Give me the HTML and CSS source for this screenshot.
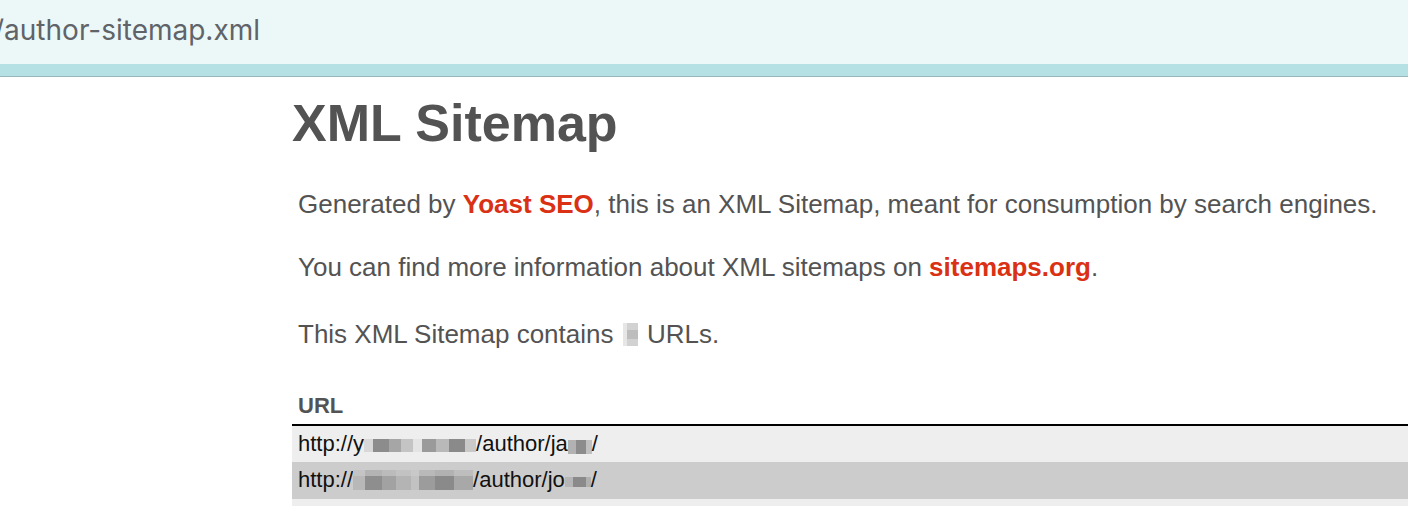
FILE: index.html
```html
<!DOCTYPE html>
<html lang="en">
<head>
<meta charset="utf-8">
<title>XML Sitemap</title>
<link rel="stylesheet" href="styles.css">
</head>
<body>
<header class="addr">
  <span class="addr-text">/author-sitemap.xml</span>
</header>
<div class="band"></div>
<main class="content">
  <h1>XML Sitemap</h1>
  <p class="expl expl-first">Generated by <a href="#">Yoast SEO</a>, this is an XML Sitemap, meant for consumption by search engines.</p>
  <p class="expl expl-second">You can find more information about XML sitemaps on <a href="#">sitemaps.org</a>.</p>
  <p class="expl">This XML Sitemap contains <span class="blur blur-count"></span> URLs.</p>
  <table class="sitemap">
    <thead>
      <tr>
        <th class="col-url">URL</th>
        <th>Images</th>
        <th>Last Mod.</th>
      </tr>
    </thead>
    <tbody>
      <tr class="odd">
        <td><a href="#">http://y<span class="blur blur-host1"></span>/author/ja<span class="blur blur-name"></span>/</a></td>
        <td>0</td>
        <td>2020-01-01</td>
      </tr>
      <tr class="hover">
        <td><a href="#">http://<span class="blur blur-host2"></span>/author/jo<span class="blur blur-name2"></span>/</a></td>
        <td>0</td>
        <td>2020-01-01</td>
      </tr>
      <tr class="odd">
        <td><a href="#">http://example.local/author/admin/</a></td>
        <td>0</td>
        <td>2020-01-01</td>
      </tr>
    </tbody>
  </table>
</main>
</body>
</html>
```
FILE: styles.css
```css
html, body {
  margin: 0;
  padding: 0;
  overflow: hidden;
  background: #fff;
}
body {
  font-family: "Liberation Sans", Arial, Helvetica, sans-serif;
  color: #545353;
  font-size: 26px;
}
.addr {
  height: 64px;
  background: #ecf8f8;
  display: flex;
  align-items: center;
  overflow: hidden;
}
.addr-text {
  font-family: "Inter", "Liberation Sans", sans-serif;
  font-size: 28px;
  color: #606368;
  margin-left: -6px;
  position: relative;
  top: -2px;
}
.band {
  height: 12px;
  background: #b5e0e4;
  border-bottom: 1px solid #97b6b9;
}
.content {
  margin-left: 292px;
  width: 2000px;
}
h1 {
  font-size: 52px;
  font-weight: bold;
  line-height: 60px;
  margin: 16px 0 0;
  color: #545353;
}
.expl {
  margin: 36px 6px;
  line-height: 31.2px;
}
.expl-first {
  margin-bottom: 32px;
}
.expl-second {
  margin-top: 32px;
}
.expl a {
  color: #da3114;
  font-weight: bold;
  text-decoration: none;
}
.blur {
  display: inline-block;
  vertical-align: baseline;
}
.blur-count {
  width: 15px;
  height: 23px;
  margin: 0 2px 0 2px;
  vertical-align: -3px;
  background:
    linear-gradient(to bottom, rgba(230,230,230,0.5) 0 30%, rgba(0,0,0,0) 30% 70%, rgba(230,230,230,0.5) 70% 100%),
    linear-gradient(to right, #e6e6e6 0 30%, #bdbdbd 30% 100%);
}
.sitemap {
  border-collapse: collapse;
  width: 2000px;
}
.sitemap th {
  text-align: left;
  font-size: 22px;
  font-weight: bold;
  line-height: 25px;
  padding: 6px 60px 6px 6px;
  border-bottom: 2px solid #000;
  color: #545353;
}
.sitemap th.col-url {
  width: 80%;
}
.sitemap td {
  font-size: 22px;
  line-height: 24.5px;
  padding: 6px;
  color: #000;
  white-space: nowrap;
}
.sitemap td a {
  color: #111;
  text-decoration: none;
}
.sitemap tr.odd td {
  background: #eee;
}
.sitemap tr.hover td {
  background: #ccc;
}
.blur-host1 {
  width: 112px;
  height: 13px;
  vertical-align: -1px;
  background: linear-gradient(to right,
    #d8d8d8 0 8%, #8c8c8c 8% 22%, #a6a6a6 22% 33%, #c4c4c4 33% 44%,
    #e4e4e4 44% 52%, #9a9a9a 52% 64%, #b9b9b9 64% 76%, #8a8a8a 76% 90%, #c9c9c9 90% 100%);
}
.blur-host2 {
  width: 120px;
  height: 20px;
  vertical-align: -3px;
  background:
    linear-gradient(to bottom, rgba(204,204,204,0.6) 0 30%, rgba(0,0,0,0) 30% 100%),
    linear-gradient(to right,
    #b8b8b8 0 10%, #8e8e8e 10% 24%, #a2a2a2 24% 36%, #b4b4b4 36% 48%,
    #c2c2c2 48% 55%, #9c9c9c 55% 68%, #8a8a8a 68% 84%, #a8a8a8 84% 100%);
}
.blur-name {
  width: 24px;
  height: 14px;
  vertical-align: -3px;
  background: linear-gradient(to right, #b2b2b2 0 35%, #8c8c8c 35% 75%, #c0c0c0 75% 100%);
}
.blur-name2 {
  width: 26px;
  height: 10px;
  background: linear-gradient(to right, #b6b6b6 0 30%, #8a8a8a 30% 80%, #b0b0b0 80% 100%);
}
```
